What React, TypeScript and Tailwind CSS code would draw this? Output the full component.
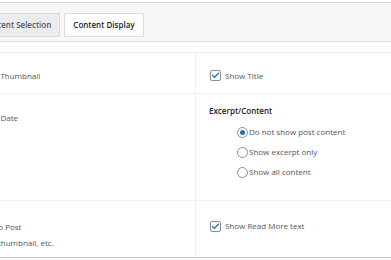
import { Check } from 'lucide-react'

function Checkbox() {
  return (
    <span className="flex h-[11px] w-[11px] items-center justify-center rounded-[2px] border border-[#8c8f94] bg-white">
      <Check className="h-[9px] w-[9px] text-[#2271b1]" strokeWidth={3.5} />
    </span>
  )
}

function Radio({ checked }: { checked?: boolean }) {
  return (
    <span className="flex h-[11px] w-[11px] items-center justify-center rounded-full border border-[#8c8f94] bg-white">
      {checked ? <span className="h-[5px] w-[5px] rounded-full bg-[#2271b1]" /> : null}
    </span>
  )
}

function App() {
  return (
    <div className="h-[260px] w-[391px] overflow-hidden bg-white font-['Open_Sans',sans-serif] text-[8px] text-[#50575e]">
      <div className="ml-[-30px] w-[421px] pt-[2px]">
        <div className="flex h-[40px] items-start gap-[4px] border-y border-[#dcdcde] bg-[#f7f7f7] pl-[4px] pt-[10px]">
          <div className="flex h-[24px] items-center border border-[#dcdcde] bg-[#ececec] px-[8px] font-semibold text-[#50575e]">
            Content Selection
          </div>
          <div className="flex h-[24px] items-center border border-[#dcdcde] bg-white px-[8px] font-semibold text-[#1d2327]">
            Content Display
          </div>
        </div>

        <div className="mt-[10px] border-t border-[#f0f0f1]">
          <div className="grid h-[41px] grid-cols-[226px_1fr] border-b border-[#f0f0f1]">
            <div className="flex items-center border-r border-[#f0f0f1] pl-[8px] pt-[5px]">Show Thumbnail</div>
            <div className="flex items-center gap-[4px] pl-[14px] pt-[5px]">
              <Checkbox />
              <span>Show Title</span>
            </div>
          </div>

          <div className="grid h-[107px] grid-cols-[226px_1fr] border-b border-[#f0f0f1]">
            <div className="border-r border-[#f0f0f1] pl-[8px] pt-[18px] leading-[12px]">Show Date</div>
            <div className="pl-[13px] pt-[11px] leading-[12px]">
              <div className="font-semibold text-[#1d2327]">Excerpt/Content</div>
              <div className="mt-[9px] flex flex-col gap-[8px] pl-[28px]">
                <label className="flex h-[12px] items-center gap-[1px]">
                  <Radio checked />
                  <span>Do not show post content</span>
                </label>
                <label className="flex h-[12px] items-center gap-[1px]">
                  <Radio />
                  <span>Show excerpt only</span>
                </label>
                <label className="flex h-[12px] items-center gap-[1px]">
                  <Radio />
                  <span>Show all content</span>
                </label>
              </div>
            </div>
          </div>

          <div className="grid h-[57px] grid-cols-[226px_1fr] border-b border-[#c3c4c7]">
            <div className="border-r border-[#f0f0f1] pl-[8px] pt-[18px] leading-[16px]">
              <div>Link to Post</div>
              <div>Title, thumbnail, etc.</div>
            </div>
            <div className="flex items-center gap-[4px] self-start pl-[14px] pt-[19px]">
              <Checkbox />
              <span>Show Read More text</span>
            </div>
          </div>
        </div>
      </div>
    </div>
  )
}

export default App
